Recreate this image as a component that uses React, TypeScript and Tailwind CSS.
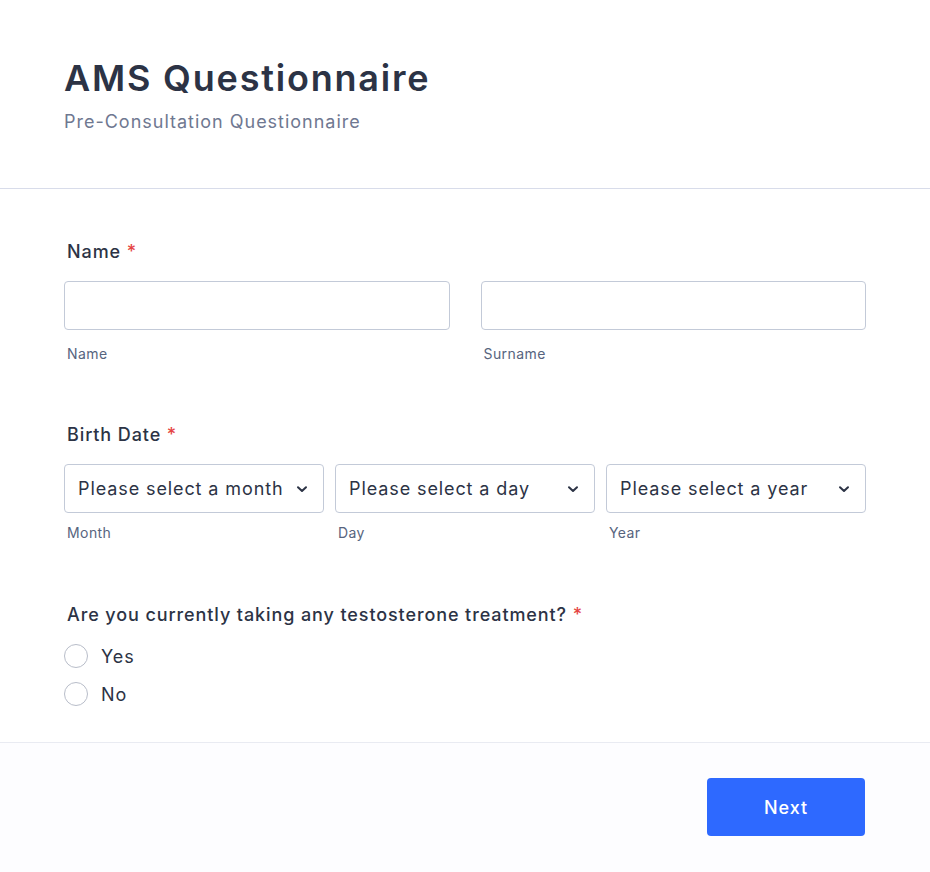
import React from "react";

function Chevron() {
  return (
    <svg width="14" height="14" viewBox="0 0 14 14" fill="none" className="shrink-0">
      <path d="M3 5.2 L7 9 L11 5.2" stroke="#2c3345" strokeWidth="2" strokeLinecap="round" strokeLinejoin="round" />
    </svg>
  );
}

function Select({ text }: { text: string }) {
  return (
    <div className="h-[49px] rounded-[4px] border border-[#c3cad8] bg-white flex items-center justify-between pl-[13px] pr-[14px]">
      <span className="text-[18px] text-[#2c3345] tracking-[0.05em]">{text}</span>
      <Chevron />
    </div>
  );
}

function Radio({ label }: { label: string }) {
  return (
    <div className="flex items-center gap-[13px] h-[24px]">
      <div className="w-[24px] h-[24px] rounded-full border border-[#b8bdc9] bg-white" />
      <span className="text-[18px] text-[#2c3345] tracking-[0.05em]">{label}</span>
    </div>
  );
}

function Sub({ children, mt }: { children: React.ReactNode; mt: string }) {
  return <div className={`${mt} text-[14px] leading-[20px] text-[#57647e] pl-[3px] tracking-[0.03em]`}>{children}</div>;
}

export default function App() {
  return (
    <div
      className="w-[930px] h-[872px] bg-white flex flex-col"
      style={{ fontFamily: "Inter, 'Noto Sans', sans-serif" }}
    >
      <div className="px-[64px] pt-[56px] pb-[52px] border-b border-[#d8dcea]">
        <h1 className="text-[36px] leading-[44px] font-semibold text-[#2c3345] tracking-[0.05em]">AMS Questionnaire</h1>
        <p className="mt-[8px] text-[18px] leading-[28px] text-[#6f7891] tracking-[0.055em]">Pre-Consultation Questionnaire</p>
      </div>

      <div className="px-[64px] pt-[49px] pb-[36px] border-b border-[#e9ebf2]">
        <div className="text-[18px] leading-[28px] font-medium text-[#2c3345] pl-[3px] tracking-[0.05em]">
          Name <span className="text-[#e54545]">*</span>
        </div>
        <div className="mt-[15px] grid grid-cols-2 gap-[31px]">
          <div>
            <div className="h-[49px] rounded-[4px] border border-[#c3cad8] bg-white" />
            <Sub mt="mt-[14px]">Name</Sub>
          </div>
          <div>
            <div className="h-[49px] rounded-[4px] border border-[#c3cad8] bg-white" />
            <Sub mt="mt-[14px]">Surname</Sub>
          </div>
        </div>

        <div className="mt-[57px] text-[18px] leading-[28px] font-medium text-[#2c3345] pl-[3px] tracking-[0.05em]">
          Birth Date <span className="text-[#e54545]">*</span>
        </div>
        <div className="mt-[15px] grid grid-cols-3 gap-[11px]">
          <div>
            <Select text="Please select a month" />
            <Sub mt="mt-[10px]">Month</Sub>
          </div>
          <div>
            <Select text="Please select a day" />
            <Sub mt="mt-[10px]">Day</Sub>
          </div>
          <div>
            <Select text="Please select a year" />
            <Sub mt="mt-[10px]">Year</Sub>
          </div>
        </div>

        <div className="mt-[58px] text-[18px] leading-[28px] font-medium text-[#2c3345] pl-[3px] tracking-[0.05em]">
          Are you currently taking any testosterone treatment? <span className="text-[#e54545]">*</span>
        </div>
        <div className="mt-[15px] flex flex-col gap-[14px]">
          <Radio label="Yes" />
          <Radio label="No" />
        </div>
      </div>

      <div className="flex-1 bg-[#fdfdff] px-[65px] pt-[35px] flex justify-end items-start">
        <button className="w-[158px] h-[58px] rounded-[4px] bg-[#2e69ff] text-white text-[18px] font-medium tracking-[0.05em]">
          Next
        </button>
      </div>
    </div>
  );
}
